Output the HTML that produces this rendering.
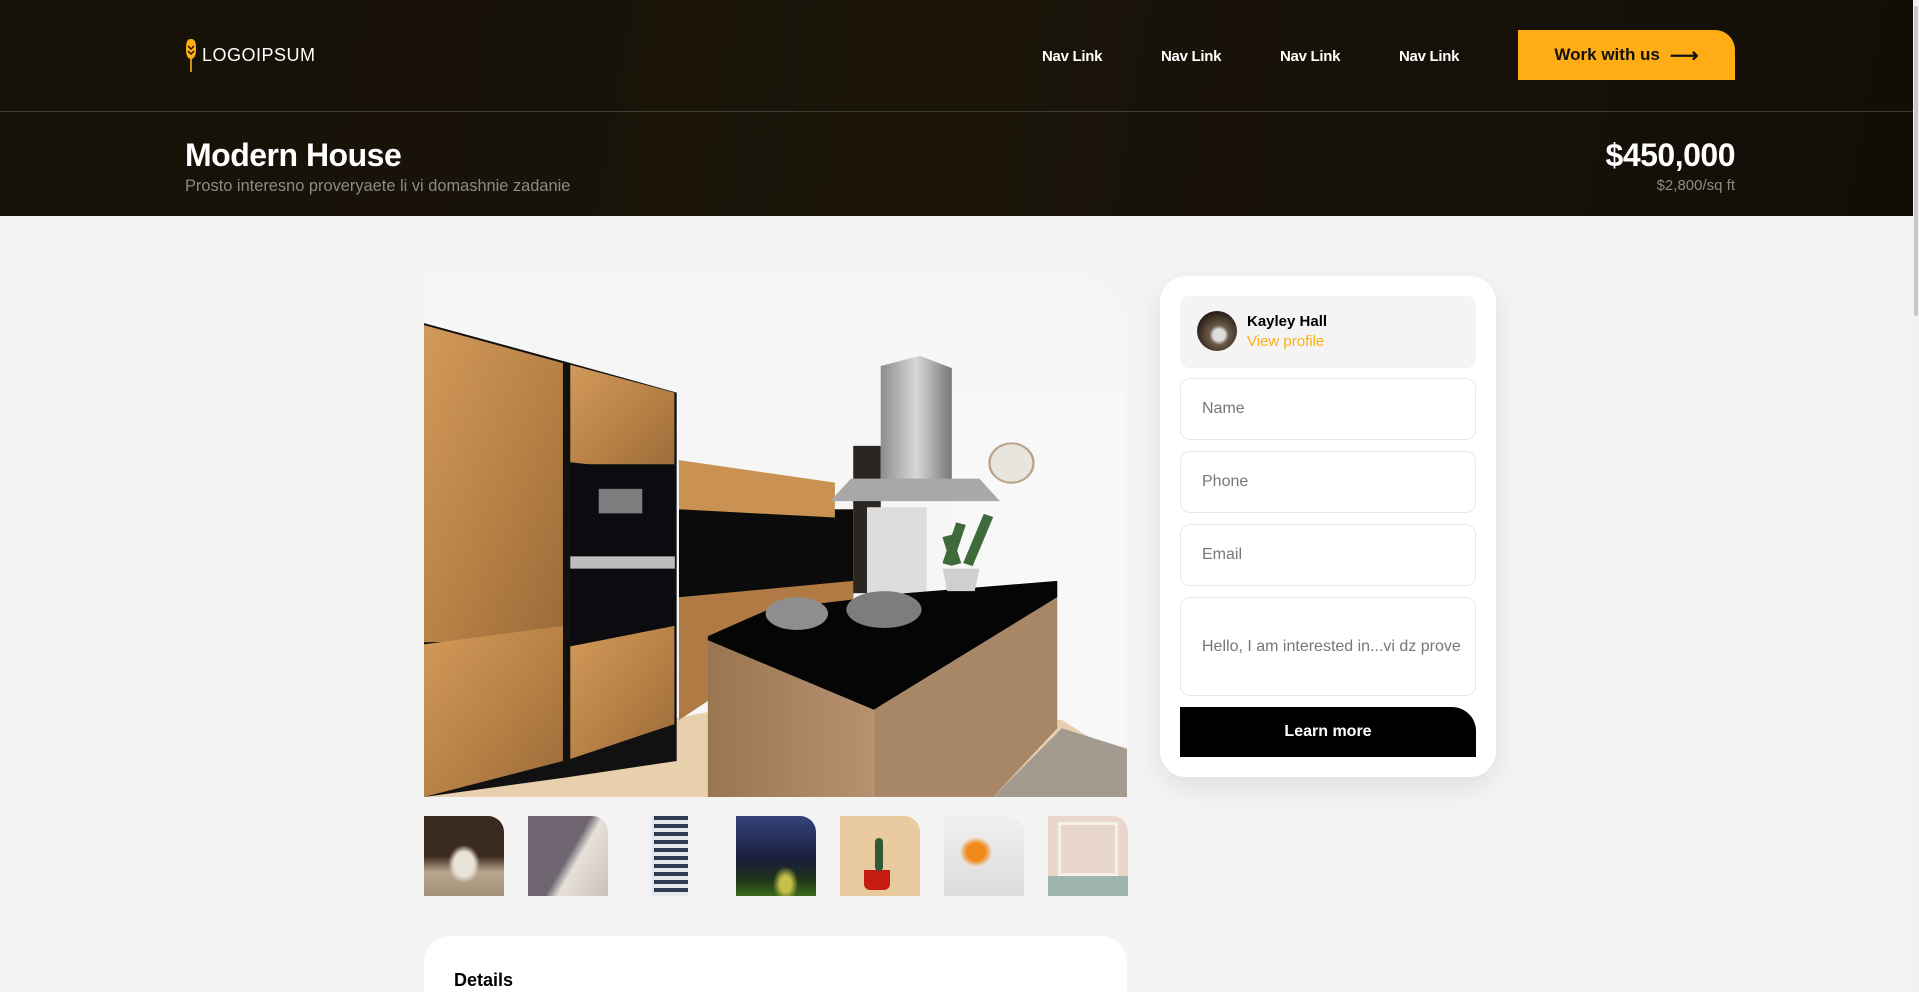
<!DOCTYPE html>
<html style="overflow:hidden;height:992px"><head><meta charset="utf-8"><style>
*{box-sizing:border-box;margin:0;padding:0}
body{width:1919px;height:992px;overflow:hidden;background:#f4f4f4;font-family:"Liberation Sans",sans-serif;position:relative}
.hdr{position:absolute;left:0;top:0;width:1919px;height:216px;background:linear-gradient(100deg,#161107,#1a1409 50%,#120e07)}
.line{position:absolute;left:0;top:111px;width:1919px;height:1px;background:#3d3a32}
.logo{position:absolute;left:185px;top:38px;display:flex;align-items:center;gap:5px;color:#fff;font-size:18px;letter-spacing:0.5px}
.nav{position:absolute;top:48px;color:#fff;font-size:15px;font-weight:bold;letter-spacing:-0.3px}
.btn{position:absolute;left:1518px;top:30px;width:217px;height:50px;background:#ffad14;border-top-right-radius:20px;color:#111;font-weight:bold;font-size:17px;display:flex;align-items:center;justify-content:center;gap:10px}
h1{position:absolute;left:185px;top:137px;color:#fff;font-size:32px;font-weight:bold;letter-spacing:-0.5px}
.sub{position:absolute;left:185px;top:177px;color:#8d8a84;font-size:16.4px}
.price{position:absolute;right:184px;top:137px;color:#fff;font-size:32px;font-weight:bold;letter-spacing:-0.5px}
.psub{position:absolute;right:184px;top:177px;color:#8d8a84;font-size:15px}
.main{position:absolute;left:424px;top:276px;width:703px;height:521px;border-top-right-radius:60px;overflow:hidden;background:#f2f2f2}
.th{position:absolute;top:816px;width:80px;height:80px;border-top-right-radius:16px;overflow:hidden}
.card{position:absolute;left:1160px;top:276px;width:336px;height:501px;background:#fff;border-radius:26px;box-shadow:0 10px 30px rgba(0,0,0,.09)}
.prof{position:absolute;left:20px;top:20px;width:296px;height:72px;background:#f4f4f4;border-radius:10px}
.av{position:absolute;left:17px;top:15px;width:40px;height:40px;border-radius:50%;background:radial-gradient(circle at 55% 60%,#ddd 0 18%,#6b5a48 30%,#2a2018 70%)}
.nm{position:absolute;left:67px;top:17px;font-weight:bold;font-size:15px;color:#000}
.vp{position:absolute;left:67px;top:37px;font-size:15px;color:#ffad14}
.in{position:absolute;left:20px;width:296px;height:62px;border:1px solid #e8e8e8;border-radius:10px;color:#777;font-size:16px;padding:0 0 0 21px;display:flex;align-items:center}
.lm{position:absolute;left:20px;top:431px;width:296px;height:50px;background:#000;color:#fff;font-weight:bold;font-size:16px;border-top-right-radius:24px;display:flex;align-items:center;justify-content:center}
.det{position:absolute;left:424px;top:936px;width:703px;height:56px;background:#fff;border-radius:26px 26px 0 0;overflow:hidden}
.det b{position:absolute;left:30px;top:34px;font-size:18px}
.sb{position:absolute;right:0;top:0;width:6px;height:992px;background:#f1f1f1}
.sb i{position:absolute;left:1px;top:6px;width:4px;height:310px;background:#c8c8c8;border-radius:2px}
</style></head><body>
<div class="hdr"></div><div class="line"></div>
<div class="logo"><svg width="12" height="34" viewBox="0 0 12 34"><path d="M6 1c4 0 5 3 5 10s-2 10-5 10S1 18 1 11 2 1 6 1z" fill="#ffad14"/><path d="M3 8l3 3 3-3M3 13l3 3 3-3" stroke="#161107" stroke-width="1.4" fill="none"/><rect x="5.2" y="20" width="1.6" height="14" fill="#ffad14"/></svg><span>LOGOIPSUM</span></div>
<div class="nav" style="left:1042px">Nav Link</div>
<div class="nav" style="left:1161px">Nav Link</div>
<div class="nav" style="left:1280px">Nav Link</div>
<div class="nav" style="left:1399px">Nav Link</div>
<div class="btn">Work with us <span style="font-size:20px">⟶</span></div>
<h1>Modern House</h1>
<div class="sub">Prosto interesno proveryaete li vi domashnie zadanie</div>
<div class="price">$450,000</div>
<div class="psub">$2,800/sq ft</div>

<div class="main"><svg width="703" height="521" viewBox="9 15 1533 1273" preserveAspectRatio="none">
<defs><linearGradient id="w" x1="0" x2="1" y1="0" y2="1"><stop offset="0" stop-color="#d29a5a"/><stop offset=".5" stop-color="#b98346"/><stop offset="1" stop-color="#9a6a3a"/></linearGradient>
<linearGradient id="w2" x1="0" x2="1"><stop offset="0" stop-color="#9a7552"/><stop offset="1" stop-color="#b89270"/></linearGradient>
<linearGradient id="st" x1="0" x2="1"><stop offset="0" stop-color="#8d8d8d"/><stop offset=".5" stop-color="#d8d8d8"/><stop offset="1" stop-color="#777"/></linearGradient></defs>
<rect x="0" y="0" width="1600" height="1300" fill="#f6f6f6"/>
<rect x="1160" y="300" width="380" height="1000" fill="#f8f8f8"/>
<polygon points="0,1288 300,1150 630,1080 1400,1100 1542,1200 1542,1288" fill="#e8cfae"/>
<polygon points="1250,1288 1400,1120 1542,1170 1542,1288" fill="#a49a90"/>
<polygon points="9,130 320,225 560,300 560,1200 320,1240 9,1288" fill="#111"/>
<polygon points="9,135 312,228 312,905 9,910" fill="url(#w)"/>
<polygon points="9,915 312,870 312,1200 9,1288" fill="url(#w)"/>
<polygon points="328,232 555,300 555,498 328,470" fill="url(#w)"/>
<rect x="328" y="475" width="228" height="440" fill="#0c0c10"/>
<rect x="328" y="700" width="228" height="30" fill="#bdbdbd"/>
<rect x="390" y="535" width="95" height="60" fill="#7d7d80"/>
<polygon points="328,920 555,870 555,1110 328,1195" fill="url(#w)"/>
<rect x="565" y="585" width="380" height="215" fill="#0b0b0b"/>
<polygon points="565,465 905,520 905,605 565,585" fill="#c99252"/>
<polygon points="565,800 945,760 945,820 565,1100" fill="#b07a44"/>
<rect x="945" y="430" width="60" height="360" fill="#2b2622"/>
<rect x="975" y="580" width="130" height="210" fill="#ddd"/>
<polygon points="1005,235 1090,210 1160,240 1160,520 1005,520" fill="url(#st)"/>
<polygon points="895,565 940,510 1220,510 1265,565" fill="#a8a8a8"/>
<circle cx="1290" cy="472" r="48" fill="#e8e4de" stroke="#b9a48a" stroke-width="5"/>
<polygon points="628,895 760,830 1060,790 1390,760 1390,800 990,1075 628,905" fill="#050505"/>
<polygon points="628,905 990,1075 990,1288 628,1288" fill="url(#w2)"/>
<polygon points="990,1075 1390,800 1390,1120 1250,1288 990,1288" fill="#a88766"/>
<ellipse cx="822" cy="840" rx="68" ry="40" fill="#8e8e8e"/>
<ellipse cx="1012" cy="830" rx="82" ry="45" fill="#7d7d7d"/>
<polygon points="1140,730 1220,730 1210,785 1150,785" fill="#cfcfcf"/>
<path d="M1150 720 L1180 620 M1195 720 L1240 600 M1170 720 L1150 650" stroke="#3f6b3a" stroke-width="22"/>
</svg></div>

<div class="th" style="left:424px;background:radial-gradient(ellipse at 50% 60%,#e9e2d6 0 18%,transparent 28%),linear-gradient(180deg,#3a2a20 0 50%,#b8a58d 70%,#a3917a)"></div>
<div class="th" style="left:528px;background:linear-gradient(120deg,#6f6672 0 50%,#e6e0d8 60%,#c9c2bb);"></div>
<div class="th" style="left:632px;background:linear-gradient(90deg,#f2f2f2 0 25%,#dfe4ea 25% 70%,#f2f2f2 70%);"><div style="position:absolute;left:22px;top:0;width:34px;height:80px;background:repeating-linear-gradient(180deg,#2b3d55 0 4px,#e6e9ee 4px 8px)"></div></div>
<div class="th" style="left:736px;background:radial-gradient(ellipse at 62% 85%,#c6c04a 0 8%,transparent 18%),linear-gradient(180deg,#35437a 0,#1a1f3a 55%,#1e3417 80%,#3b6a1c)"></div>
<div class="th" style="left:840px;background:#e9c99e"><div style="position:absolute;left:24px;top:54px;width:26px;height:20px;background:#c41c12;border-radius:0 0 6px 6px"></div><div style="position:absolute;left:35px;top:22px;width:8px;height:33px;background:#2f5a3a;border-radius:4px"></div></div>
<div class="th" style="left:944px;background:radial-gradient(ellipse at 40% 45%,#f08a1a 0 14%,transparent 24%),linear-gradient(180deg,#f0f0f0,#dcdcdc)"></div>
<div class="th" style="left:1048px;background:linear-gradient(180deg,#e9d6cc 0 75%,#9fb5b0 75%)"><div style="position:absolute;inset:6px 10px 20px;border:3px solid #f3efe9"></div></div>

<div class="card">
<div class="prof"><div class="av"></div><div class="nm">Kayley Hall</div><div class="vp">View profile</div></div>
<div class="in" style="top:102px">Name</div>
<div class="in" style="top:175px">Phone</div>
<div class="in" style="top:248px">Email</div>
<div class="in" style="top:321px;height:99px;white-space:nowrap;overflow:hidden">Hello, I am interested in...vi dz prove</div>
<div class="lm">Learn more</div>
</div>
<div class="det"><b>Details</b></div>
<div class="sb"><i></i></div>
</body></html>
